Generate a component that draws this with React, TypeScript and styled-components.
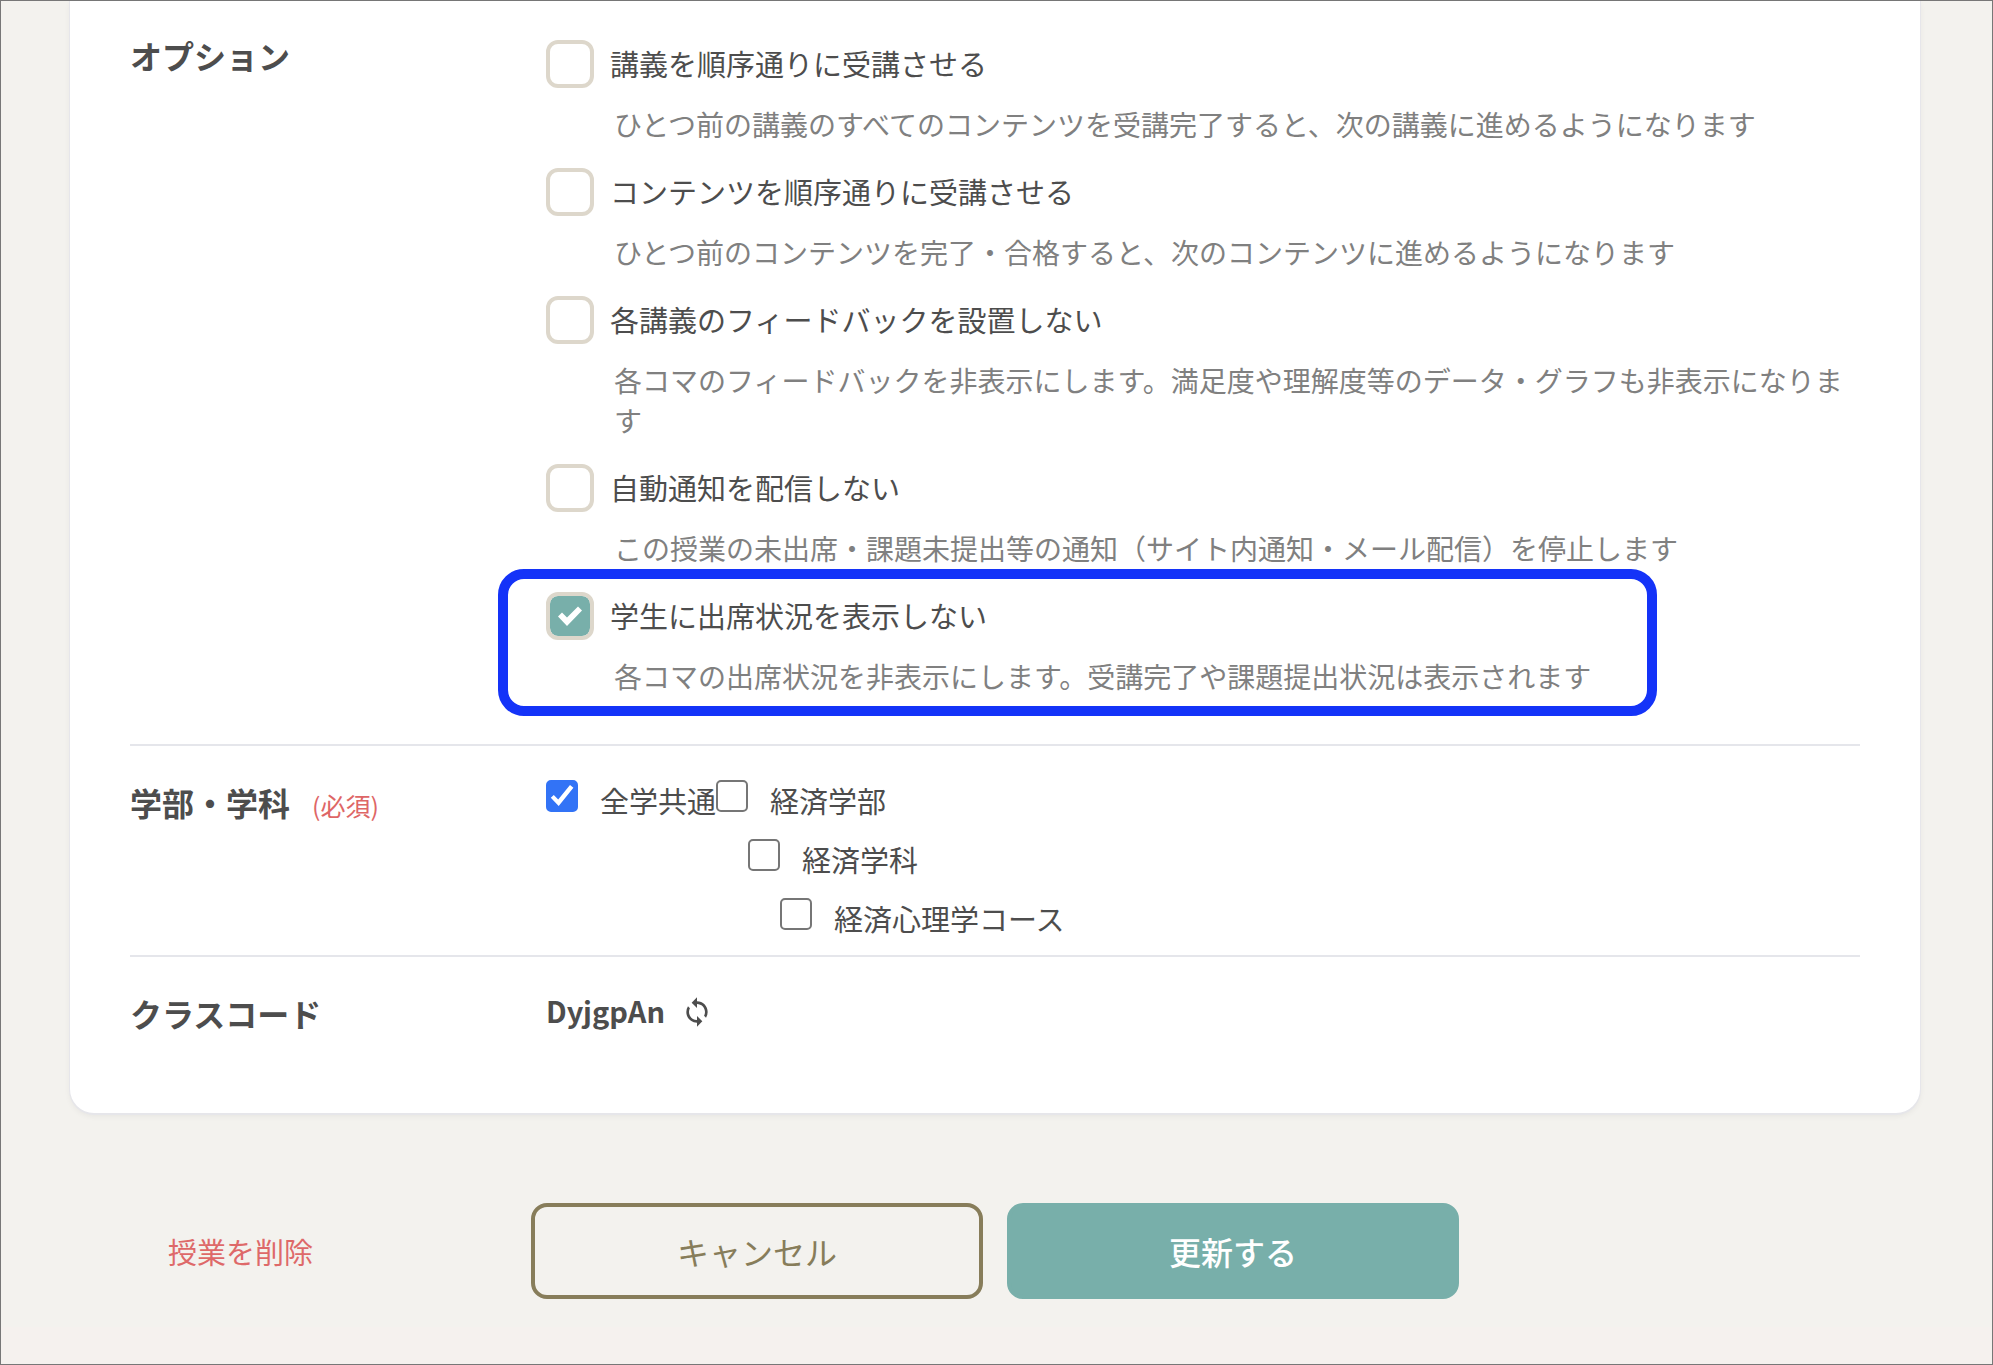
import React from "react";
import styled, { createGlobalStyle } from "styled-components";
import { MdSync } from "react-icons/md";

const GlobalStyle = createGlobalStyle`
  *, *::before, *::after { box-sizing: border-box; }
  body {
    margin: 0;
    background: #f5f1ee;
    color: #4d4d4d;
    font-family: "Noto Sans CJK JP", "Noto Sans", sans-serif;
  }
  button, input { font: inherit; }
`;

const Page = styled.div`
  min-height: 100vh;
  display: flex;
  flex-direction: column;
  border: 1px solid #777;
  background: #f5f1ee;
`;

const Main = styled.main`
  background: #f3f2ee;
  padding: 0 72px 28px 69px;
`;

const Card = styled.div`
  background: #fff;
  border-radius: 0 0 24px 24px;
  padding: 0 60px 44px;
  box-shadow: 0 1px 0 1px #e6e6ea, 0 3px 6px rgba(0, 0, 0, 0.06);
`;

const Section = styled.section<{ $top?: number; $bottom?: number }>`
  display: grid;
  grid-template-columns: 416px minmax(0, 1fr);
  padding: ${(p) => p.$top ?? 32}px 0 ${(p) => p.$bottom ?? 0}px;

  & + & {
    border-top: 2px solid #e5e6eb;
  }
`;

const Heading = styled.h2`
  margin: 0;
  display: flex;
  align-items: baseline;
  align-self: start;
  gap: 22px;
  font-size: 32px;
  line-height: 48px;
  font-weight: 700;
`;

const Required = styled.span`
  color: #de6666;
  font-size: 25px;
  font-weight: 400;
`;

const OptionList = styled.div`
  display: flex;
  flex-direction: column;
  gap: 24px;
  padding-top: 9px;
`;

const OptionItem = styled.div`
  position: relative;
`;

const OptionLabel = styled.label`
  display: flex;
  align-items: flex-start;
  gap: 16px;
  height: 48px;
  font-size: 29px;
  line-height: 46px;
`;

const Description = styled.p`
  margin: 16px 0 0;
  padding-left: 68px;
  color: #808080;
  font-size: 28px;
  line-height: 40px;
`;

const Highlight = styled.div`
  position: absolute;
  top: -23px;
  left: -48px;
  width: 1159px;
  height: 147px;
  border: 10px solid #1433f8;
  border-radius: 26px;
  pointer-events: none;
`;

const CheckMark = styled.svg`
  position: absolute;
  inset: 0;
  width: 100%;
  height: 100%;
  display: none;
  fill: #fff;
  pointer-events: none;
`;

const BoxWrap = styled.span<{ $size: number }>`
  position: relative;
  flex: none;
  width: ${(p) => p.$size}px;
  height: ${(p) => p.$size}px;
`;

const BaseInput = styled.input`
  appearance: none;
  display: block;
  width: 100%;
  height: 100%;
  margin: 0;
  background: #fff;

  &:checked + svg {
    display: block;
  }
`;

const LargeInput = styled(BaseInput)`
  border: 4px solid #ddd7cb;
  border-radius: 12px;

  &:checked {
    background: #78afaa;
    background-clip: padding-box;
  }
`;

const SmallInput = styled(BaseInput)`
  border: 2px solid #767676;
  border-radius: 5px;

  &:checked {
    border-color: #3273f6;
    background: #3273f6;
  }
`;

const Tree = styled.div`
  display: flex;
  align-items: flex-start;
`;

const TreeLabel = styled.label<{ $level?: number }>`
  display: flex;
  align-items: flex-start;
  gap: 22px;
  height: 59px;
  padding-top: 2px;
  padding-left: ${(p) => (p.$level ?? 0) * 32}px;
  font-size: 29px;
  line-height: 40px;
  white-space: nowrap;
`;

const CodeRow = styled.div`
  display: flex;
  align-items: center;
  gap: 16px;
  height: 42px;
  font-size: 29px;
  line-height: 42px;
  font-weight: 700;
`;

const IconButton = styled.button`
  display: flex;
  padding: 4px 0 0;
  border: 0;
  background: none;
  color: inherit;
  font-size: 32px;
  cursor: pointer;
`;

const Actions = styled.div`
  display: grid;
  grid-template-columns: 1fr minmax(0, 452px) minmax(0, 452px) 1fr;
  column-gap: 24px;
  align-items: center;
  margin-top: 90px;
`;

const DeleteLink = styled.a`
  padding-left: 98px;
  color: #de6969;
  font-size: 29px;
  line-height: 44px;
  text-decoration: none;
`;

const Button = styled.button<{ $primary?: boolean }>`
  height: 96px;
  border: 4px solid ${(p) => (p.$primary ? "#78afaa" : "#877d5a")};
  border-radius: 16px;
  background: ${(p) => (p.$primary ? "#78afaa" : "transparent")};
  color: ${(p) => (p.$primary ? "#fff" : "#877d5a")};
  font-size: 32px;
  font-weight: ${(p) => (p.$primary ? 500 : 400)};
  line-height: 48px;
  cursor: pointer;
`;

type Option = {
  label: string;
  description: string;
  checked?: boolean;
  highlighted?: boolean;
};

const options: Option[] = [
  {
    label: "講義を順序通りに受講させる",
    description:
      "ひとつ前の講義のすべてのコンテンツを受講完了すると、次の講義に進めるようになります",
  },
  {
    label: "コンテンツを順序通りに受講させる",
    description:
      "ひとつ前のコンテンツを完了・合格すると、次のコンテンツに進めるようになります",
  },
  {
    label: "各講義のフィードバックを設置しない",
    description:
      "各コマのフィードバックを非表示にします。満足度や理解度等のデータ・グラフも非表示になります",
  },
  {
    label: "自動通知を配信しない",
    description:
      "この授業の未出席・課題未提出等の通知（サイト内通知・メール配信）を停止します",
  },
  {
    label: "学生に出席状況を表示しない",
    description:
      "各コマの出席状況を非表示にします。受講完了や課題提出状況は表示されます",
    checked: true,
    highlighted: true,
  },
];

const departments = ["経済学部", "経済学科", "経済心理学コース"];

function LargeCheckbox({ id, checked }: { id: string; checked?: boolean }) {
  return (
    <BoxWrap $size={48}>
      <LargeInput id={id} type="checkbox" defaultChecked={checked} />
      <CheckMark viewBox="0 0 48 48" aria-hidden="true">
        <path d="M12 24.5 16 20.5 21 25.5 32 14.5 36 18.5 21 34Z" />
      </CheckMark>
    </BoxWrap>
  );
}

function SmallCheckbox({ id, checked }: { id: string; checked?: boolean }) {
  return (
    <BoxWrap $size={32}>
      <SmallInput id={id} type="checkbox" defaultChecked={checked} />
      <CheckMark viewBox="0 0 32 32" aria-hidden="true">
        <path d="M4.8 17.8 7.8 15 12.2 19.6 24 5 27.4 7.8 12.7 26Z" />
      </CheckMark>
    </BoxWrap>
  );
}

export default function App() {
  return (
    <Page>
      <GlobalStyle />
      <Main>
        <Card>
          <Section $top={30} $bottom={48}>
            <Heading>オプション</Heading>
            <OptionList>
              {options.map((option, i) => (
                <OptionItem key={option.label}>
                  <OptionLabel htmlFor={`option-${i}`}>
                    <LargeCheckbox id={`option-${i}`} checked={option.checked} />
                    {option.label}
                  </OptionLabel>
                  <Description>{option.description}</Description>
                  {option.highlighted && <Highlight />}
                </OptionItem>
              ))}
            </OptionList>
          </Section>

          <Section>
            <Heading>
              学部・学科 <Required>(必須)</Required>
            </Heading>
            <Tree>
              <TreeLabel htmlFor="common">
                <SmallCheckbox id="common" checked />
                全学共通
              </TreeLabel>
              <div>
                {departments.map((name, level) => (
                  <TreeLabel key={name} htmlFor={`dept-${level}`} $level={level}>
                    <SmallCheckbox id={`dept-${level}`} />
                    {name}
                  </TreeLabel>
                ))}
              </div>
            </Tree>
          </Section>

          <Section $bottom={32}>
            <Heading>クラスコード</Heading>
            <CodeRow>
              DyjgpAn
              <IconButton type="button" aria-label="クラスコードを再生成">
                <MdSync />
              </IconButton>
            </CodeRow>
          </Section>
        </Card>

        <Actions>
          <DeleteLink href="#delete">授業を削除</DeleteLink>
          <Button type="button">キャンセル</Button>
          <Button type="submit" $primary>
            更新する
          </Button>
        </Actions>
      </Main>
    </Page>
  );
}
